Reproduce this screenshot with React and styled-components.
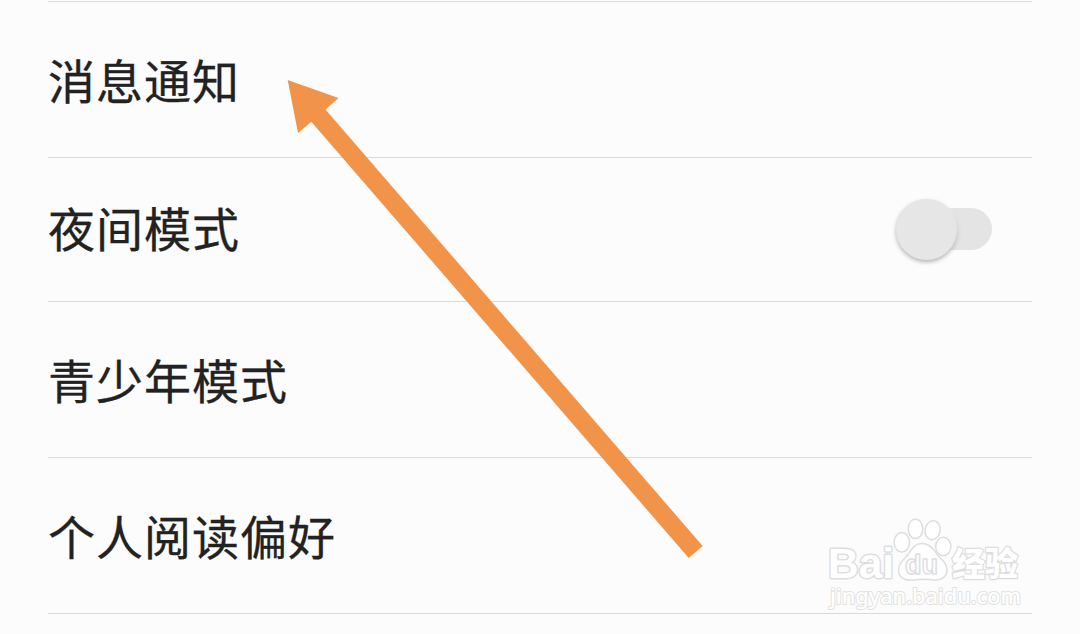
import React, { useState } from 'react'
import { styled, createGlobalStyle } from 'styled-components'

const settings = [
  { id: 'notice', label: '消息通知' },
  { id: 'night', label: '夜间模式', toggle: true },
  { id: 'teen', label: '青少年模式' },
  { id: 'reading', label: '个人阅读偏好' },
]

export default function App() {
  const [night, setNight] = useState(false)

  return (
    <Page>
      <GlobalStyle />
      <List>
        {settings.map((item) => (
          <Row key={item.id} $compact={item.toggle}>
            <Label $compact={item.toggle}>{item.label}</Label>
            {
              item.toggle
              ?
              <Switch role="switch" aria-checked={night} aria-label={item.label} onClick={() => setNight(!night)}>
                <Track />
                <Thumb $on={night} />
              </Switch>
              :
              ''
            }
          </Row>
        ))}
      </List>
      <Pointer />
      <Watermark />
    </Page>
  )
}

function Pointer() {
  return (
    <Overlay viewBox="0 0 1080 634" aria-hidden="true">
      <polygon
        points="287.7,80 338.5,98 325.5,109.5 702.7,546 688.7,558 311.3,121.7 298,133"
        fill="#f2934a"
      />
    </Overlay>
  )
}

function Watermark() {
  return (
    <Overlay viewBox="0 0 1080 634">
      <Mark>
        <Brand x="828" y="578" textLength="66" lengthAdjust="spacingAndGlyphs">Bai</Brand>
        <ellipse cx="901.8" cy="542.3" rx="7.7" ry="9.7" />
        <ellipse cx="915.5" cy="528.8" rx="7.3" ry="9.8" />
        <ellipse cx="932.6" cy="530.2" rx="7.5" ry="9.6" transform="rotate(10 932.6 530.2)" />
        <ellipse cx="943.3" cy="546.5" rx="7.6" ry="9.2" />
        <path d="M922 543.5C930 543.5 934 550 938 555.5C942 560 947 563 947 570C947 577 941 580.5 934 580C928 579.5 925 578.5 918 579.5C908 581 898.500 580.500 898.500 570C898.500 562.500 904 560 908 554.500C912 549 914.500 543.500 922 543.500Z" />
        <Du x="905" y="573.5" textLength="33" lengthAdjust="spacingAndGlyphs">du</Du>
        <Chinese x="952" y="575.5" textLength="66" lengthAdjust="spacingAndGlyphs">经验</Chinese>
        <Url x="830" y="604" textLength="191" lengthAdjust="spacingAndGlyphs">jingyan.baidu.com</Url>
      </Mark>
    </Overlay>
  )
}

const GlobalStyle = createGlobalStyle`
  body {
    margin: 0;
    background-color: #fcfcfc;
    overflow: hidden;
  }
`
const Page = styled.main`
  position: relative;
  box-sizing: border-box;
  width: 1080px;
  height: 634px;
  padding: 1px 48px 0;
  background-color: #fcfcfc;
  overflow: hidden;
  font-family: "Noto Sans CJK SC", sans-serif;
`
const List = styled.ul`
  margin: 0;
  padding: 0;
  border-top: 1px solid #d9d9d9;
  list-style: none;
`
const Row = styled.li`
  box-sizing: border-box;
  height: ${(props) => (props.$compact ? 144 : 156)}px;
  padding-right: 40px;
  border-bottom: 1px solid #d9d9d9;

  display: flex;
  align-items: center;
  justify-content: space-between;
`
const Label = styled.span`
  padding-bottom: ${(props) => (props.$compact ? 6 : 2)}px;
  color: #222;
  font-size: 47px;
  line-height: 72px;
  letter-spacing: 1px;
  -webkit-text-stroke: 0.3px #222;
`
const Switch = styled.button`
  width: 96px;
  height: 61px;
  margin-bottom: 1px;
  padding: 0;
  border: 0;
  background-color: transparent;
  cursor: pointer;

  display: grid;
  align-items: center;
`
const Track = styled.span`
  grid-area: 1 / 1;
  width: 84px;
  height: 42px;
  border-radius: 21px;
  background-color: #e4e4e4;
  justify-self: end;
`
const Thumb = styled.span`
  grid-area: 1 / 1;
  width: 61px;
  height: 61px;
  border-radius: 50%;
  background-color: #e6e6e6;
  box-shadow: 0 2px 4px rgba(0, 0, 0, 0.3), 0 0 3px 1px #fff;
  justify-self: ${(props) => (props.$on ? 'end' : 'start')};
  z-index: 1;
`
const Overlay = styled.svg`
  position: absolute;
  top: 0;
  left: 0;
  width: 1080px;
  height: 634px;
  pointer-events: none;
`
const Mark = styled.g`
  fill: #fff;
  stroke: #dedede;
  stroke-width: 1.5px;
  stroke-linejoin: round;
`
const Brand = styled.text`
  font-family: "Liberation Sans", sans-serif;
  font-size: 43px;
  font-weight: 700;
  stroke-width: 3px;
  paint-order: stroke;
`
const Du = styled.text`
  font-family: "Liberation Sans", sans-serif;
  font-size: 27px;
  font-weight: 700;
`
const Chinese = styled.text`
  font-family: "Noto Sans CJK SC", sans-serif;
  font-size: 33px;
  font-weight: 900;
  stroke-width: 2.5px;
  paint-order: stroke;
`
const Url = styled.text`
  font-family: "Noto Sans", sans-serif;
  font-size: 22px;
  font-weight: 500;
  stroke: #e2e2e2;
  stroke-width: 2px;
  paint-order: stroke;
`
